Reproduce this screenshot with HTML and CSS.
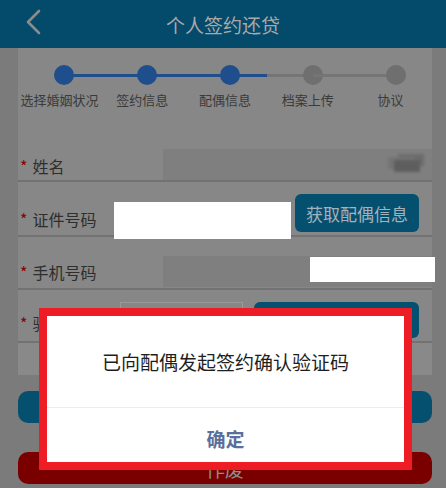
FILE: index.html
```html
<!DOCTYPE html>
<html lang="zh-CN">
<head>
    <meta charset="UTF-8">
    <meta name="viewport" content="width=device-width, initial-scale=1.0">
    <title>个人签约还贷</title>
    <link rel="stylesheet" href="styles.css">
</head>
<body>
    <header class="topbar">
        <svg class="back" width="16" height="26" viewBox="0 0 16 26">
            <polyline points="13,2 2,13 13,24" fill="none" stroke="#8c8c8c" stroke-width="2.6" stroke-linecap="round" stroke-linejoin="round"/>
        </svg>
        <h1>个人签约还贷</h1>
    </header>

    <div class="page">
        <div class="card">
            <ol class="steps">
                <li class="done"><span class="dot"></span><span class="step-name">选择婚姻状况</span></li>
                <li class="done"><span class="dot"></span><span class="step-name">签约信息</span></li>
                <li class="done"><span class="dot"></span><span class="step-name">配偶信息</span></li>
                <li class="half"><span class="dot"></span><span class="step-name">档案上传</span></li>
                <li><span class="dot"></span><span class="step-name">协议</span></li>
            </ol>

            <div class="row row-name">
                <label class="label"><i>*</i>姓名</label>
                <div class="field field-wide"><span class="blurred"></span></div>
            </div>
            <div class="row row-id">
                <label class="label"><i>*</i>证件号码</label>
                <div class="masked"></div>
                <button class="btn btn-fetch">获取配偶信息</button>
            </div>
            <div class="row row-phone">
                <label class="label"><i>*</i>手机号码</label>
                <div class="field field-wide"><span class="masked-small"></span></div>
            </div>
            <div class="row row-code">
                <label class="label"><i>*</i>验证码</label>
                <div class="field field-code"></div>
                <button class="btn btn-code">获取验证码</button>
            </div>
            <div class="row-spacer"></div>
        </div>

        <button class="btn-block btn-next">下一步</button>
        <button class="btn-block btn-void">作废</button>
    </div>

    <div class="dialog">
        <p class="dialog-msg">已向配偶发起签约确认验证码</p>
        <div class="dialog-ok">确定</div>
    </div>
</body>
</html>
```

FILE: styles.css
```css
body {
    margin: 0;
    width: 446px;
    height: 488px;
    overflow: hidden;
    position: relative;
    background-color: #7b7b7b;
    font-family: "Noto Sans CJK SC", "Noto Sans", sans-serif;
}
.topbar {
    height: 48px;
    background-color: #044a6b;
    display: flex;
    align-items: center;
    justify-content: center;
    position: relative;
}
.topbar h1 {
    margin: 0;
    font-size: 19px;
    font-weight: normal;
    color: #a9a9a9;
}
.back {
    position: absolute;
    left: 26px;
    top: 9px;
}
.page {
    padding: 0 14px 0 18px;
}
.card {
    background-color: #878787;
}

/* steps */
.steps {
    list-style: none;
    margin: 0;
    padding: 17px 0 0;
    height: 66px;
    display: grid;
    grid-template-columns: repeat(5, 1fr);
}
.steps li {
    position: relative;
    display: flex;
    flex-direction: column;
    align-items: center;
}
.steps li:not(:first-child)::before {
    content: "";
    position: absolute;
    top: 9px;
    left: calc(-50% + 5px);
    width: 100%;
    height: 3px;
    background: #757575;
}
.steps li.done::before {
    background: #1e4e8c;
}
.steps li.half::before {
    background: linear-gradient(to right, #1e4e8c 44%, #757575 44%);
}
.dot {
    width: 20px;
    height: 20px;
    border-radius: 50%;
    background: #6f6f6f;
    margin-left: 10px;
    position: relative;
}
.done .dot {
    background: #1e4e8c;
}
.step-name {
    margin-top: 6px;
    font-size: 13px;
    line-height: 18px;
    color: #3a3a3a;
    white-space: nowrap;
}

/* form rows */
.row {
    display: flex;
    align-items: flex-start;
    border-bottom: 2px solid #727272;
}
.label {
    padding-left: 2px;
    font-size: 16px;
    line-height: 20px;
    color: #2e2e2e;
    white-space: nowrap;
}
.label i {
    font-style: normal;
    color: #870000;
    margin-right: 5px;
}
.field {
    background-color: #7f7f7f;
    height: 31px;
    display: flex;
    justify-content: flex-end;
}
.field-wide {
    flex: 1;
}
.row-name {
    height: 49px;
}
.row-name .label {
    width: 143px;
    margin-top: 25px;
}
.row-name .field {
    margin-top: 18px;
}
.blurred {
    width: 26px;
    height: 12px;
    margin: 11px 12px 0 0;
    background: #5e5e5e;
    box-shadow: -6px -3px 0 #747474, 4px -6px 0 #6c6c6c;
    filter: blur(1.5px);
}
.row-id {
    height: 53px;
}
.row-id .label {
    width: 94px;
    margin-top: 27px;
}
.masked {
    width: 177px;
    height: 37px;
    margin-top: 20px;
    background: #fff;
}
.btn {
    border: none;
    border-radius: 6px;
    background-color: #06506f;
    color: #a3b3bd;
    font-family: inherit;
    font-size: 17px;
    padding: 0;
}
.btn-fetch {
    width: 124px;
    height: 38px;
    margin: 12px 0 0 4px;
}
.row-phone {
    height: 51px;
}
.row-phone .label {
    width: 143px;
    margin-top: 25px;
}
.row-phone .field {
    margin-top: 19px;
}
.masked-small {
    width: 125px;
    height: 25px;
    margin: 1px -3px 0 0;
    background: #fff;
}
.row-code {
    height: 51px;
}
.row-code .label {
    width: 100px;
    margin-top: 23px;
}
.field-code {
    width: 121px;
    height: 36px;
    margin-top: 12px;
    border: 1px solid #9a9a9a;
    background-color: #878787;
}
.btn-code {
    width: 165px;
    height: 36px;
    margin: 12px 0 0 11px;
}
.row-spacer {
    height: 32px;
    background-color: #898989;
}
.btn-block {
    display: block;
    width: 100%;
    height: 32px;
    border: none;
    border-radius: 10px;
    font-family: inherit;
    font-size: 19px;
    color: #8d8d8d;
}
.btn-next {
    margin-top: 16px;
    background-color: #06506f;
}
.btn-void {
    margin-top: 29px;
    background-color: #7a0000;
}

/* dialog */
.dialog {
    position: absolute;
    left: 39px;
    top: 308px;
    width: 357px;
    border: 8px solid #ee1c25;
    background: #fff;
}
.dialog-msg {
    margin: 0;
    height: 91px;
    line-height: 91px;
    text-align: center;
    font-size: 19px;
    color: #1e1e1e;
    border-bottom: 1px solid #ececec;
}
.dialog-ok {
    height: 54px;
    box-sizing: border-box;
    padding-top: 8px;
    line-height: 46px;
    text-align: center;
    font-size: 19px;
    font-weight: bold;
    color: #5a6f9c;
}
```
